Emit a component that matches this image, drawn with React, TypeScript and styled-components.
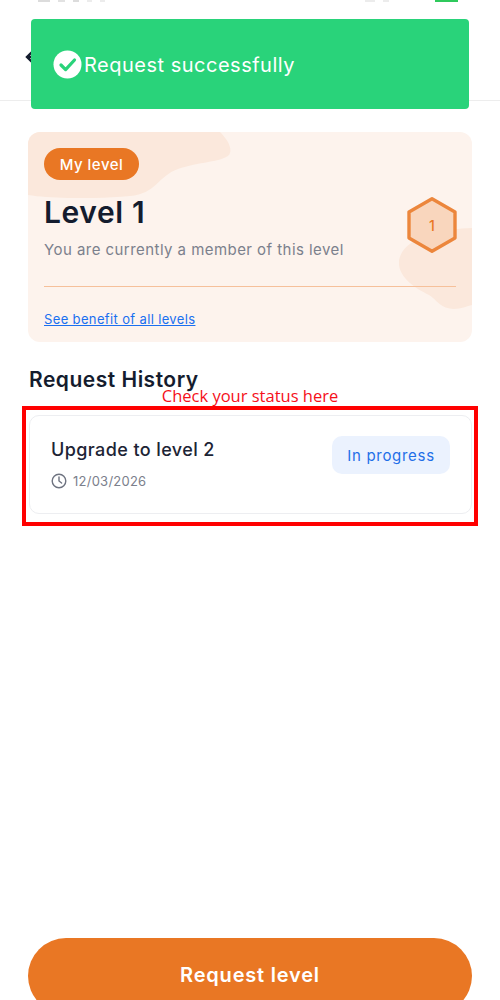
import styled, { createGlobalStyle } from "styled-components";

const GlobalStyle = createGlobalStyle`
  html, body {
    margin: 0;
    padding: 0;
    background: #fff;
  }
  body {
    font-family: "Inter", "Liberation Sans", sans-serif;
  }
`;

const Page = styled.div`
  position: relative;
  display: flex;
  flex-direction: column;
  width: 500px;
  height: 1000px;
  overflow: hidden;
  background: #fff;
`;

const StatusBar = styled.div`
  flex-shrink: 0;
  height: 2px;
  overflow: hidden;
  display: flex;
  padding-left: 38px;
  gap: 8px;
`;

const StatusMark = styled.div<{ $width: number; $color: string; $push?: number }>`
  width: ${({ $width }) => $width}px;
  height: 1.5px;
  margin-left: ${({ $push }) => $push ?? 0}px;
  background: ${({ $color }) => $color};
`;

const Header = styled.header`
  flex-shrink: 0;
  height: 99px;
  box-sizing: border-box;
  border-bottom: 1px solid #ededed;
  padding: 46px 0 0 25px;
`;

const Toast = styled.div`
  position: absolute;
  top: 19px;
  left: 31px;
  width: 438px;
  height: 90px;
  box-sizing: border-box;
  padding: 0 22px;
  display: flex;
  align-items: center;
  gap: 2px;
  border-radius: 4px;
  background: #29d37a;
  color: #fff;
  font-size: 20px;
  letter-spacing: 0.5px;
`;

const ToastText = styled.span`
  padding-top: 2px;
`;

const Main = styled.main`
  flex: 1;
  padding: 31px 28px 0;
`;

const LevelCard = styled.section`
  position: relative;
  overflow: hidden;
  height: 210px;
  box-sizing: border-box;
  padding: 16px 16px 0;
  border-radius: 12px;
  background: #fdf3ed;
`;

const Blob = styled.svg<{ $top: number; $left: number }>`
  position: absolute;
  top: ${({ $top }) => $top}px;
  left: ${({ $left }) => $left}px;
`;

const CardBody = styled.div`
  position: relative;
`;

const Pill = styled.span`
  display: inline-flex;
  align-items: center;
  justify-content: center;
  width: 95px;
  height: 32px;
  border-radius: 16px;
  background: #e97724;
  color: #fff;
  font-size: 15px;
  font-weight: 500;
  letter-spacing: 0.5px;
`;

const LevelTitle = styled.h1`
  margin: 0;
  padding-top: 15px;
  color: #141c2e;
  font-size: 30px;
  line-height: 34px;
  font-weight: 600;
  letter-spacing: 0.6px;
`;

const LevelNote = styled.p`
  margin: 11px 0 0;
  color: #7b808c;
  font-size: 15px;
  line-height: 20px;
  letter-spacing: 0.45px;
`;

const Divider = styled.hr`
  margin: 26px 0 0;
  border: 0;
  height: 1px;
  background: #f6c09a;
`;

const BenefitLink = styled.a`
  display: block;
  margin-top: 24px;
  color: #1a6ff0;
  font-size: 13px;
  line-height: 16px;
  letter-spacing: 0.36px;
  text-decoration: underline;
`;

const Badge = styled.div`
  position: absolute;
  top: 64px;
  right: 14px;
  width: 52px;
  height: 58px;
`;

const BadgeNumber = styled.span`
  position: absolute;
  inset: 0;
  display: flex;
  align-items: center;
  justify-content: center;
  color: #e97724;
  font-size: 14px;
  font-weight: 500;
`;

const SectionTitle = styled.h2`
  margin: 26px 0 0 1px;
  color: #141c2e;
  font-size: 21px;
  line-height: 24px;
  font-weight: 600;
  letter-spacing: 0.5px;
`;

const Hint = styled.div`
  text-align: center;
  color: #f5101a;
  font-family: "Open Sans", "Liberation Sans", sans-serif;
  font-size: 16.5px;
  line-height: 20px;
  margin-top: -6px;
`;

const Highlight = styled.div`
  margin: 0 -6px;
  padding: 5px 2px 8px 3px;
  border: 4px solid #ff0000;
`;

const RequestCard = styled.div`
  height: 99px;
  box-sizing: border-box;
  padding: 20px 21px 0;
  display: flex;
  align-items: flex-start;
  justify-content: space-between;
  border: 1px solid #edeef1;
  border-radius: 10px;
`;

const RequestInfo = styled.div`
  display: flex;
  flex-direction: column;
  gap: 12px;
  padding-top: 3px;
`;

const RequestName = styled.div`
  color: #1d2435;
  font-size: 18px;
  line-height: 22px;
  font-weight: 500;
  letter-spacing: 0.4px;
`;

const RequestDate = styled.div`
  display: flex;
  align-items: center;
  gap: 6px;
  color: #7b808c;
  font-size: 13px;
  line-height: 16px;
  letter-spacing: 0.25px;
`;

const StatusTag = styled.span`
  display: flex;
  align-items: center;
  justify-content: center;
  width: 118px;
  height: 38px;
  border-radius: 10px;
  background: #ebf2fe;
  color: #1f6fe8;
  font-size: 15px;
  font-weight: 400;
  letter-spacing: 0.7px;
`;

const SubmitButton = styled.button`
  flex-shrink: 0;
  height: 76px;
  margin: 0 28px -14px;
  border: 0;
  border-radius: 38px;
  padding: 0 0 2px;
  background: #e97724;
  color: #fff;
  font-family: inherit;
  font-size: 20px;
  font-weight: 600;
  letter-spacing: 0.8px;
`;

export default function App() {
  return (
    <Page>
      <GlobalStyle />
      <StatusBar>
        <StatusMark $width={12} $color="#dcdcdc" />
        <StatusMark $width={7} $color="#e2e2e2" />
        <StatusMark $width={6} $color="#dcdcdc" />
        <StatusMark $width={5} $color="#ececec" />
        <StatusMark $width={5} $color="#ececec" />
        <StatusMark $width={10} $color="#ececec" $push={252} />
        <StatusMark $width={6} $color="#ececec" />
        <StatusMark $width={23} $color="#2fc95c" $push={38} />
      </StatusBar>
      <Header>
        <svg width="20" height="14" viewBox="0 0 20 14" fill="none" stroke="#141c2e" strokeWidth="2.4">
          <path d="M7.500 1.500 2 7l5.500 5.500M2 7h18" />
        </svg>
      </Header>
      <Toast>
        <svg width="29" height="29" viewBox="0 0 29 29">
          <circle cx="14.5" cy="14.5" r="14" fill="#fff" />
          <path d="m8 15 4.600 4.600L21.500 10" fill="none" stroke="#29d37a" strokeWidth="3.2" strokeLinecap="round" strokeLinejoin="round" />
        </svg>
        <ToastText>Request successfully</ToastText>
      </Toast>
      <Main>
        <LevelCard>
          <Blob $top={0} $left={0} width="204" height="66" viewBox="0 0 204 66">
            <path d="M0 0H192C200 8 205 17 201 23C194 30 170 30 150 37C130 44 128 62 102 64C70 67 25 67 0 63Z" fill="#fbe8dc" />
          </Blob>
          <Blob $top={96} $left={371} width="73" height="82" viewBox="0 0 73 82">
            <path d="M73 0C45 1 5 8 0 32C-2 48 15 60 30 67C38 72 42 81 55 81C62 81 68 78 73 77Z" fill="#fbe8dc" />
          </Blob>
          <CardBody>
            <Pill>My level</Pill>
            <LevelTitle>Level 1</LevelTitle>
            <LevelNote>You are currently a member of this level</LevelNote>
            <Divider />
            <BenefitLink>See benefit of all levels</BenefitLink>
          </CardBody>
          <Badge>
            <svg width="52" height="58" viewBox="0 0 52 58">
              <path d="M26 2.800 49 16V42L26 55.200 3 42V16Z" fill="#f9d6bd" stroke="#ec863c" strokeWidth="3.4" strokeLinejoin="round" />
            </svg>
            <BadgeNumber>1</BadgeNumber>
          </Badge>
        </LevelCard>
        <SectionTitle>Request History</SectionTitle>
        <Hint>Check your status here</Hint>
        <Highlight>
          <RequestCard>
            <RequestInfo>
              <RequestName>Upgrade to level 2</RequestName>
              <RequestDate>
                <svg width="16" height="16" viewBox="0 0 16 16" fill="none" stroke="#6e7380" strokeWidth="1.4" strokeLinecap="round">
                  <circle cx="8" cy="8" r="6.800" />
                  <path d="M8 4v4l2.600 2" />
                </svg>
                12/03/2026
              </RequestDate>
            </RequestInfo>
            <StatusTag>In progress</StatusTag>
          </RequestCard>
        </Highlight>
      </Main>
      <SubmitButton>Request level</SubmitButton>
    </Page>
  );
}
